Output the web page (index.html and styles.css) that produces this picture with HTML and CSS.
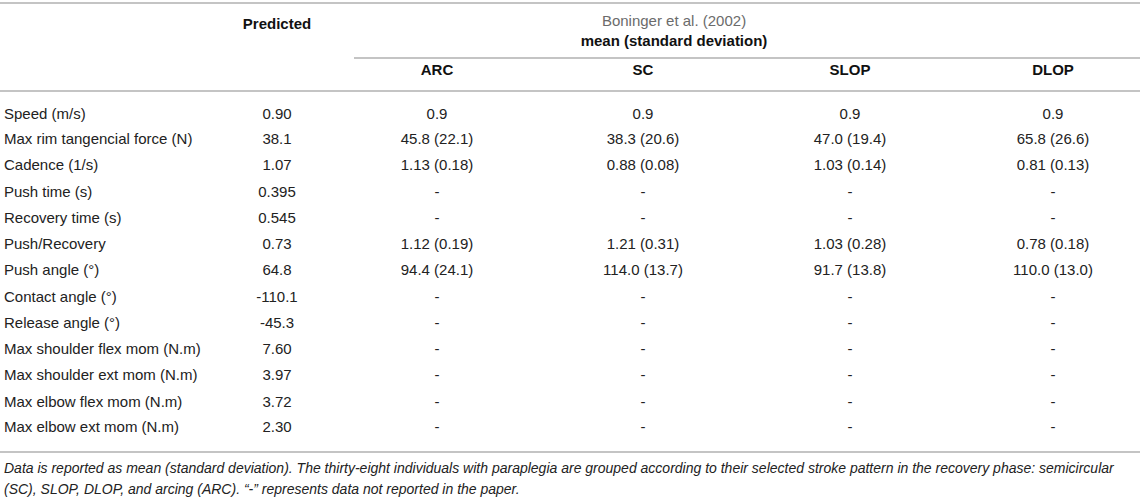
FILE: index.html
```html
<!DOCTYPE html>
<html lang="en">
<head>
  <meta charset="UTF-8" />
  <title>Table - Predicted vs Boninger et al. (2002)</title>
  <link rel="stylesheet" href="styles.css">
</head>
<body>
  <div class="table-wrap">
    <table class="data-table">
      <colgroup>
        <col class="col-label">
        <col class="col-pred">
        <col class="col-arc">
        <col class="col-sc">
        <col class="col-slop">
        <col class="col-dlop">
      </colgroup>
      <thead>
        <tr class="head-top">
          <th rowspan="2"></th>
          <th rowspan="2" class="pred-head">Predicted</th>
          <th colspan="4" class="group-head">
            <span class="source">Boninger et al. (2002)</span>
            <span class="group-sub">mean (standard deviation)</span>
          </th>
        </tr>
        <tr class="head-sub">
          <th>ARC</th>
          <th>SC</th>
          <th>SLOP</th>
          <th class="last">DLOP</th>
        </tr>
      </thead>
      <tbody>
        <tr><td>Speed (m/s)</td><td>0.90</td><td>0.9</td><td>0.9</td><td>0.9</td><td class="last">0.9</td></tr>
        <tr><td>Max rim tangencial force (N)</td><td>38.1</td><td>45.8 (22.1)</td><td>38.3 (20.6)</td><td>47.0 (19.4)</td><td class="last">65.8 (26.6)</td></tr>
        <tr><td>Cadence (1/s)</td><td>1.07</td><td>1.13 (0.18)</td><td>0.88 (0.08)</td><td>1.03 (0.14)</td><td class="last">0.81 (0.13)</td></tr>
        <tr><td>Push time (s)</td><td>0.395</td><td>-</td><td>-</td><td>-</td><td class="last">-</td></tr>
        <tr><td>Recovery time (s)</td><td>0.545</td><td>-</td><td>-</td><td>-</td><td class="last">-</td></tr>
        <tr><td>Push/Recovery</td><td>0.73</td><td>1.12 (0.19)</td><td>1.21 (0.31)</td><td>1.03 (0.28)</td><td class="last">0.78 (0.18)</td></tr>
        <tr><td>Push angle (°)</td><td>64.8</td><td>94.4 (24.1)</td><td>114.0 (13.7)</td><td>91.7 (13.8)</td><td class="last">110.0 (13.0)</td></tr>
        <tr><td>Contact angle (°)</td><td>-110.1</td><td>-</td><td>-</td><td>-</td><td class="last">-</td></tr>
        <tr><td>Release angle (°)</td><td>-45.3</td><td>-</td><td>-</td><td>-</td><td class="last">-</td></tr>
        <tr><td>Max shoulder flex mom (N.m)</td><td>7.60</td><td>-</td><td>-</td><td>-</td><td class="last">-</td></tr>
        <tr><td>Max shoulder ext mom (N.m)</td><td>3.97</td><td>-</td><td>-</td><td>-</td><td class="last">-</td></tr>
        <tr><td>Max elbow flex mom (N.m)</td><td>3.72</td><td>-</td><td>-</td><td>-</td><td class="last">-</td></tr>
        <tr><td>Max elbow ext mom (N.m)</td><td>2.30</td><td>-</td><td>-</td><td>-</td><td class="last">-</td></tr>
      </tbody>
    </table>
    <p class="caption">Data is reported as mean (standard deviation). The thirty-eight individuals with paraplegia are grouped according to their selected stroke pattern in the recovery phase: semicircular (SC), SLOP, DLOP, and arcing (ARC). “-” represents data not reported in the paper.</p>
  </div>
</body>
</html>
```

FILE: styles.css
```css
* {
  margin: 0;
  padding: 0;
  box-sizing: border-box;
}

body {
  font-family: 'Liberation Sans', Arial, sans-serif;
  font-size: 15px;
  color: #222;
  background: #fff;
}

.table-wrap {
  width: 1140px;
  padding-top: 2px;
}

.data-table {
  width: 1140px;
  table-layout: fixed;
  border-collapse: collapse;
}

.col-label { width: 200px; }
.col-pred { width: 154px; }
.col-arc { width: 166px; }
.col-sc { width: 246px; }
.col-slop { width: 168px; }
.col-dlop { width: 206px; }

.data-table th,
.data-table td {
  text-align: center;
  font-weight: normal;
  line-height: 18px;
  white-space: nowrap;
}

.data-table th {
  font-weight: bold;
  color: #111;
}

.data-table td:first-child {
  text-align: left;
  padding-left: 4px;
}

.data-table .last {
  padding-left: 32px;
}

.head-top {
  border-top: 2px solid #c4c4c4;
}

.head-top th {
  height: 55px;
  vertical-align: top;
}

.pred-head {
  padding-top: 11px;
}

.group-head {
  border-bottom: 2px solid #c4c4c4;
  padding-top: 7px;
  padding-right: 146px;
}

.data-table .group-head {
  line-height: 20px;
}

.group-head span {
  display: block;
}

.source {
  font-weight: normal;
  color: #6b6b6b;
}

.head-sub {
  border-bottom: 2px solid #c4c4c4;
}

.head-sub th {
  height: 33px;
  padding-bottom: 9px;
}

.data-table tbody td {
  height: 26.25px;
}

.data-table tbody tr:first-child td {
  height: 35px;
  padding-top: 9px;
}

.data-table tbody tr:last-child td {
  height: 37px;
  padding-bottom: 11px;
}

.data-table tbody tr:last-child {
  border-bottom: 2px solid #c4c4c4;
}

.caption {
  font-style: italic;
  font-size: 14px;
  color: #222;
  line-height: 21px;
  padding: 5px 0 0 4px;
}
```
